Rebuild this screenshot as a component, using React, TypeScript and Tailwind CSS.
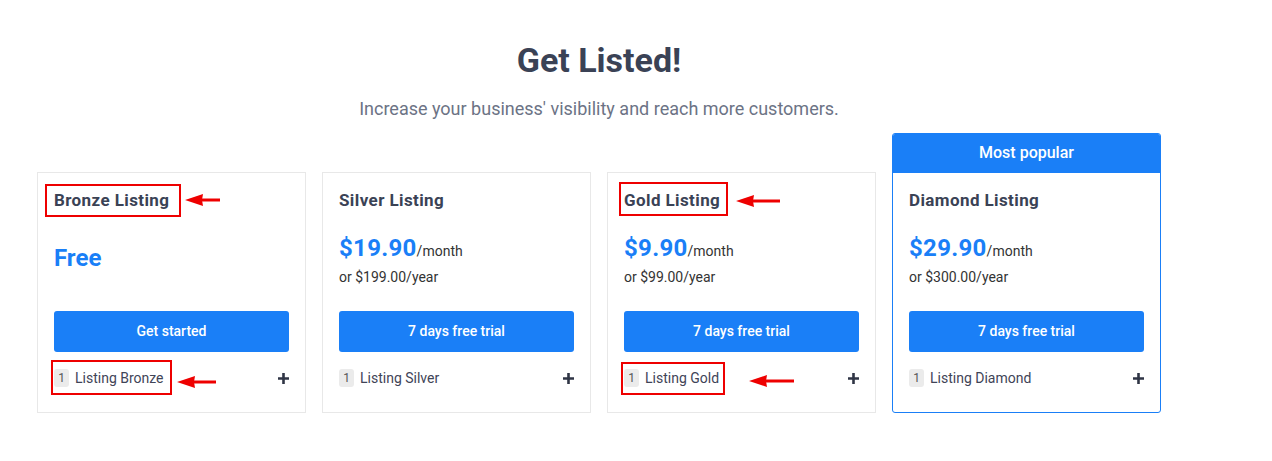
import React from "react";

type Plan = {
  name: string;
  price?: string;
  yearly?: string;
  cta: string;
  feature: string;
  popular?: boolean;
};

const plans: Plan[] = [
  { name: "Bronze Listing", cta: "Get started", feature: "Listing Bronze" },
  { name: "Silver Listing", price: "$19.90", yearly: "or $199.00/year", cta: "7 days free trial", feature: "Listing Silver" },
  { name: "Gold Listing", price: "$9.90", yearly: "or $99.00/year", cta: "7 days free trial", feature: "Listing Gold" },
  { name: "Diamond Listing", price: "$29.90", yearly: "or $300.00/year", cta: "7 days free trial", feature: "Listing Diamond", popular: true },
];

// red annotation overlays (box + arrow), in card coordinates
type Mark = { box: [number, number, number, number]; arrow: [number, number, number] };
const marks: Record<string, Mark[]> = {
  "Bronze Listing": [
    { box: [7, 11, 136, 33], arrow: [147, 182, 27] },
    { box: [13, 187, 121, 35], arrow: [139, 178, 209] },
  ],
  "Gold Listing": [
    { box: [11, 9, 109, 34], arrow: [128, 172, 28] },
    { box: [13, 189, 104, 33], arrow: [141, 186, 208] },
  ],
};

function Plus() {
  return (
    <svg width="11" height="11" viewBox="0 0 11 11" className="text-[#2f3545]">
      <path d="M5.5 0v11M0 5.5h11" stroke="currentColor" strokeWidth="2.6" />
    </svg>
  );
}

function Arrow({ x1, x2, y }: { x1: number; x2: number; y: number }) {
  const w = x2 - x1;
  return (
    <svg
      className="absolute pointer-events-none"
      style={{ left: x1, top: y - 7, width: w, height: 14 }}
      viewBox={`0 0 ${w} 14`}
    >
      <path d={`M${w} 7 L16 7`} stroke="#ee0000" strokeWidth="3" />
      <path d="M0 7 L18 1 L17 7 L18 13 Z" fill="#ee0000" />
    </svg>
  );
}

function Card({ plan }: { plan: Plan }) {
  const cardMarks = marks[plan.name] ?? [];
  const body = (
    <div className="relative h-[239px] px-[16px] pt-[15px] flex flex-col">
      <h3 className="text-[17px] leading-[24px] font-bold text-[#3a4255] tracking-[0.4px]">{plan.name}</h3>
      {plan.price ? (
        <div className="h-[99px] pt-[20px] flex flex-col">
          <div className="leading-[32px] text-[#333]">
            <span className="text-[24px] font-bold text-[#1a7ff7] tracking-[0.3px]">{plan.price}</span>
            <span className="text-[14px]">/month</span>
          </div>
          <div className="text-[14px] leading-[20px] text-[#333]">{plan.yearly}</div>
        </div>
      ) : (
        <div className="h-[99px] pt-[30px]">
          <div className="text-[24px] leading-[32px] font-bold text-[#1a7ff7]">Free</div>
        </div>
      )}
      <button className="h-[41px] w-full rounded-[3px] bg-[#1a7ff7] text-white text-[14px] font-medium">
        {plan.cta}
      </button>
      <div className="mt-[16px] flex items-center justify-between h-[20px]">
        <div className="flex items-center gap-[6px]">
          <span className="inline-flex items-center justify-center w-[15px] h-[18px] rounded-[3px] bg-[#ebebeb] text-[12px] text-[#555]">
            1
          </span>
          <span className="text-[14px] text-[#3f4457]">{plan.feature}</span>
        </div>
        <Plus />
      </div>
      {cardMarks.map((m, i) => (
        <React.Fragment key={i}>
          <div
            className="absolute border-[2.5px] border-[#ee0000] pointer-events-none"
            style={{ left: m.box[0], top: m.box[1], width: m.box[2], height: m.box[3] }}
          />
          <Arrow x1={m.arrow[0]} x2={m.arrow[1]} y={m.arrow[2]} />
        </React.Fragment>
      ))}
    </div>
  );

  if (plan.popular) {
    return (
      <div className="w-[269px] border border-solid border-[#1a7ff7] rounded-[3px] overflow-hidden bg-white">
        <div className="h-[40px] -mt-px bg-[#1a7ff7] text-white text-[16px] font-medium flex items-center justify-center">
          Most popular
        </div>
        {body}
      </div>
    );
  }
  return <div className="w-[269px] border border-[#e8e8e8] bg-white">{body}</div>;
}

export default function App() {
  return (
    <div className="w-[1272px] h-[461px] bg-white" style={{ fontFamily: "Roboto, 'Liberation Sans', sans-serif" }}>
      <div className="w-[1124px] ml-[37px] pt-[40px] flex flex-col items-center">
        <h1 className="text-[34px] leading-[40px] font-bold text-[#3a4255]">Get Listed!</h1>
        <p className="mt-[15px] text-[18px] leading-[28px] text-[#6c7385]">
          Increase your business' visibility and reach more customers.
        </p>
        <div className="mt-[10px] w-full flex items-end gap-[16px]">
          {plans.map((p) => (
            <Card key={p.name} plan={p} />
          ))}
        </div>
      </div>
    </div>
  );
}
